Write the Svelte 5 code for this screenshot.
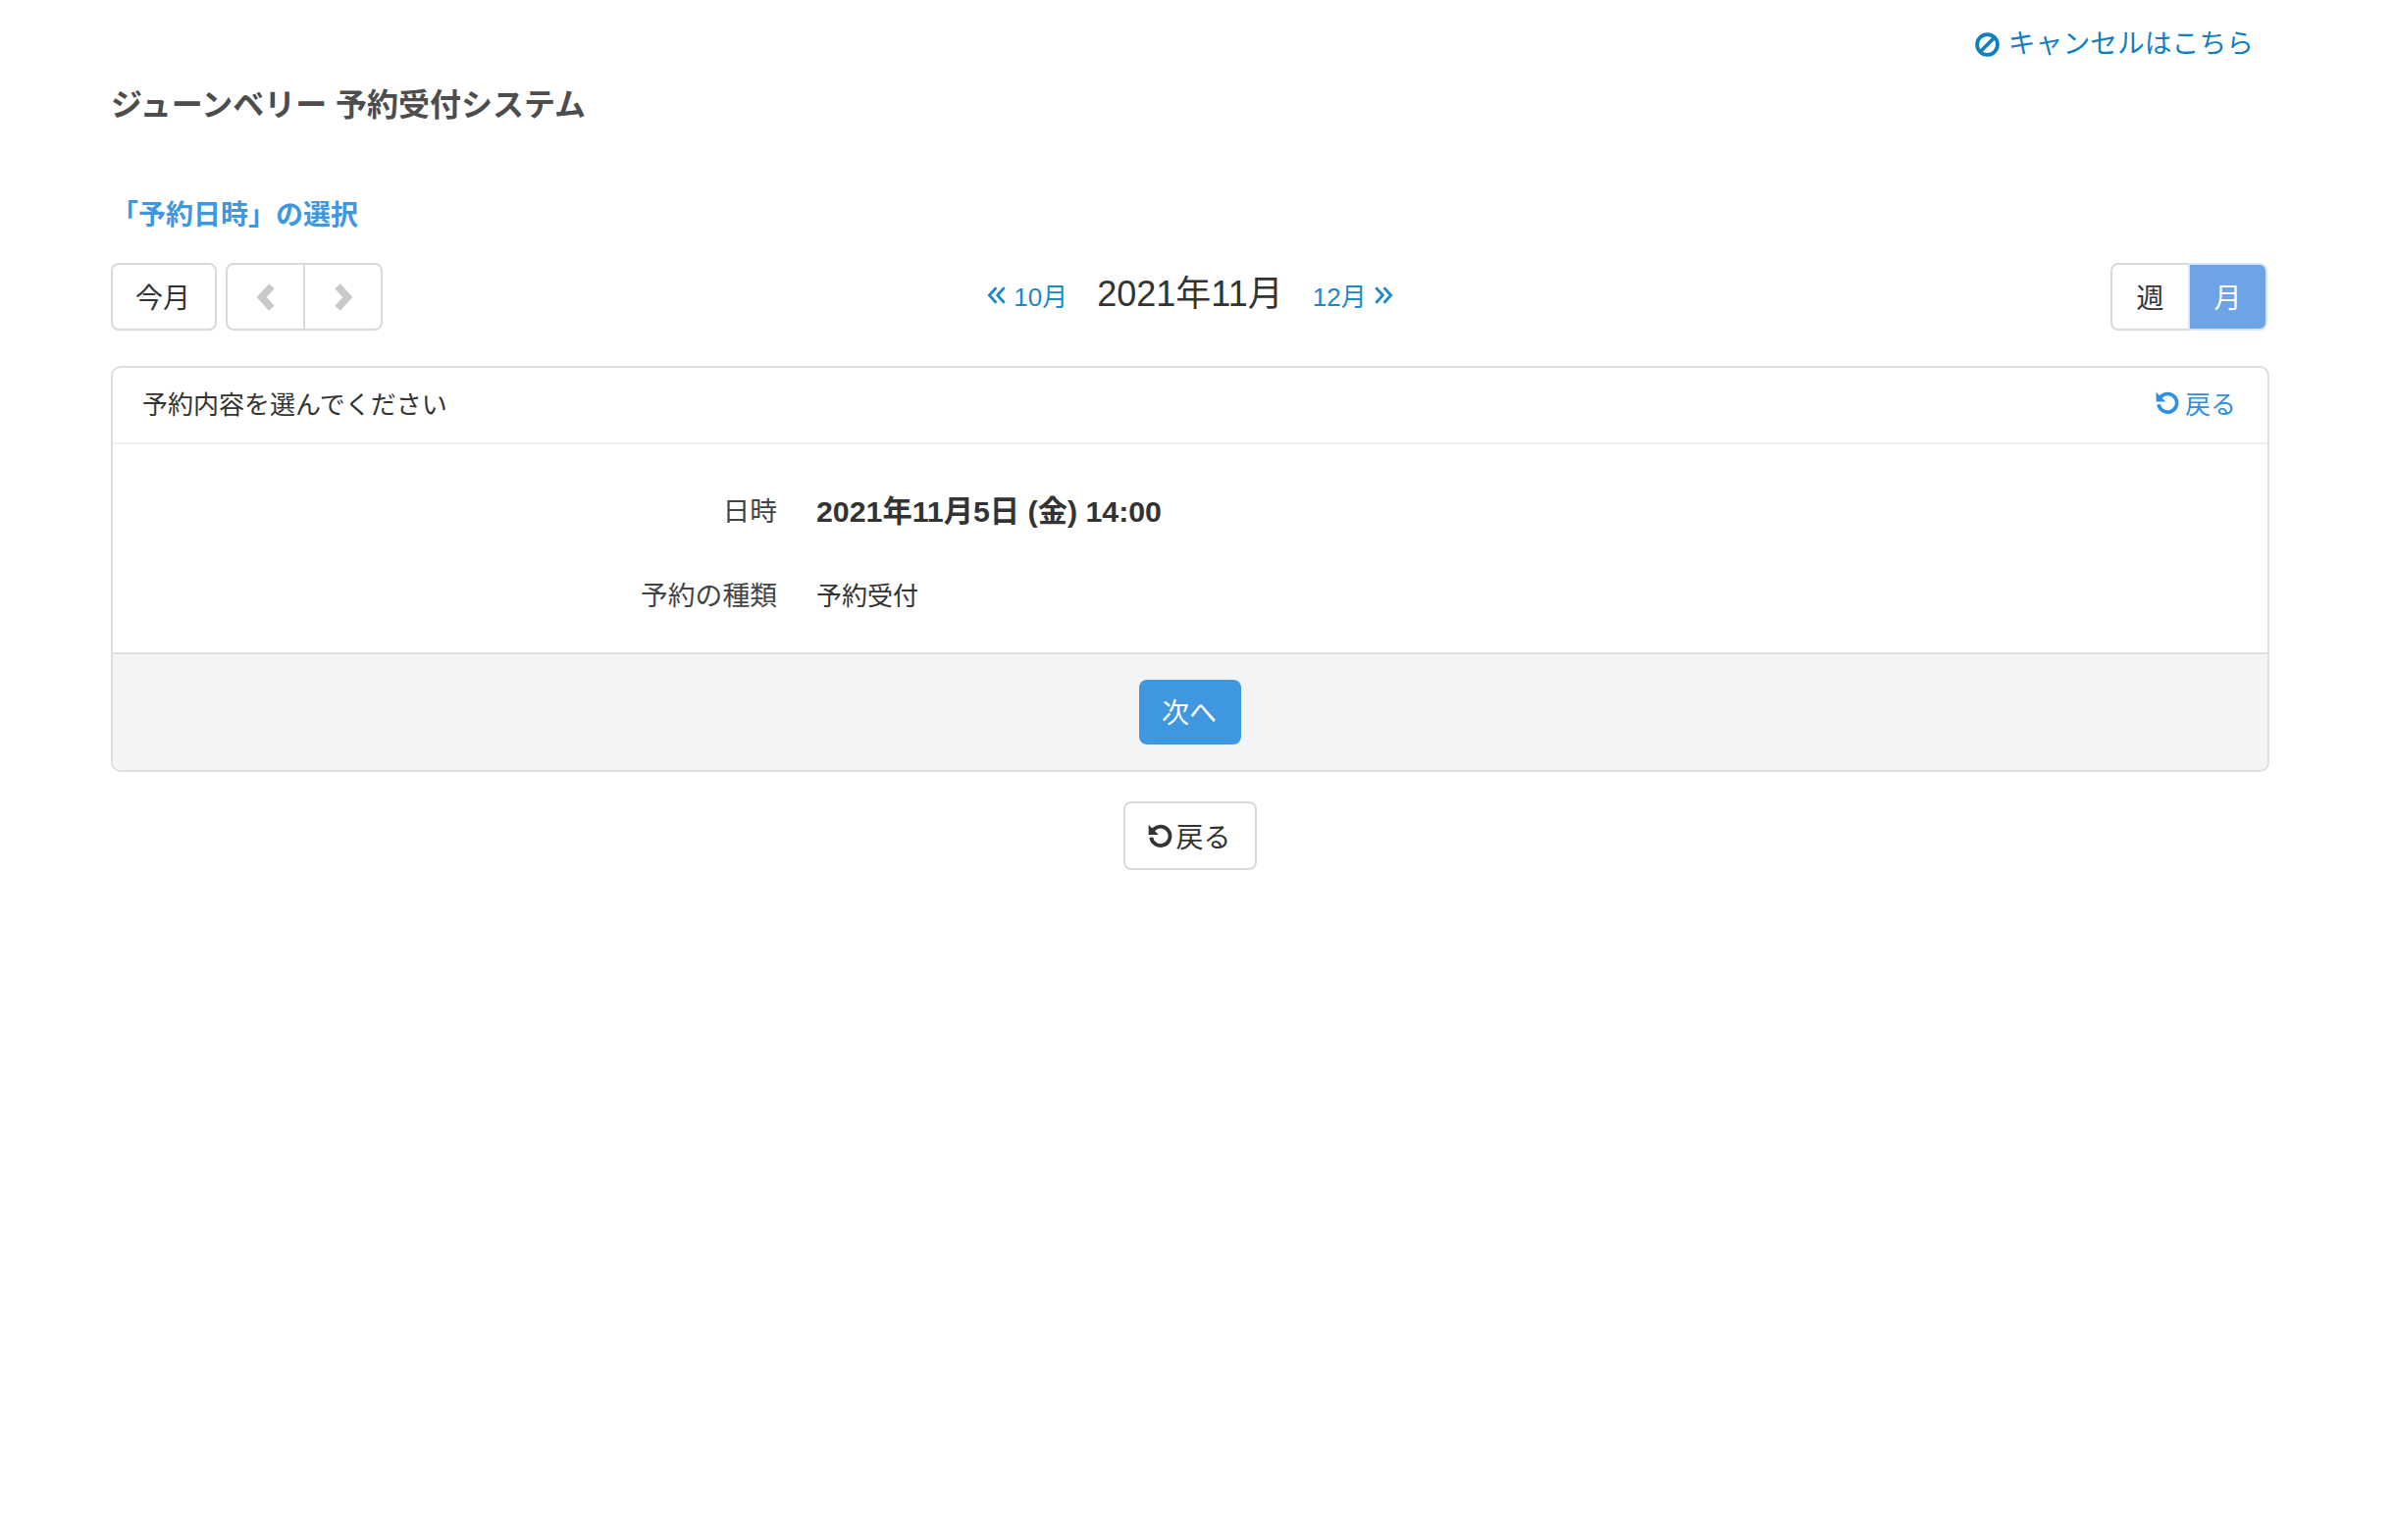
<script lang="ts">
  // Reservation confirm step: date picked, ask for the type and go on
  const rows = [
    { label: '日時', value: '2021年11月5日 (金) 14:00', strong: true },
    { label: '予約の種類', value: '予約受付', strong: false },
  ];
</script>

{#snippet undo()}
  <svg class="undo" viewBox="0 0 24 24" aria-hidden="true">
    <path d="M3.800 14a8.600 8.600 0 1 0 3.200-8L4.800 8" fill="none" stroke="currentColor" stroke-width="3.400" />
    <path d="M1.500 2.500v9h9z" fill="currentColor" />
  </svg>
{/snippet}

<div class="page">
  <div class="top-link">
    <a href="#cancel">
      <svg class="ban" viewBox="0 0 24 24" aria-hidden="true">
        <circle cx="12" cy="12" r="10" fill="none" stroke="currentColor" stroke-width="3.600" />
        <path d="M6 18 18 6" stroke="currentColor" stroke-width="3.600" />
      </svg>
      キャンセルはこちら
    </a>
  </div>

  <h1>ジューンベリー 予約受付システム</h1>
  <h2>「予約日時」の選択</h2>

  <div class="toolbar">
    <div class="left">
      <button class="btn today">今月</button>
      <div class="group">
        <button class="btn nav" aria-label="前へ">
          <svg viewBox="0 0 20 28"><path d="M15.500 3.500 6 14l9.500 10.500" fill="none" stroke="currentColor" stroke-width="7" /></svg>
        </button>
        <button class="btn nav" aria-label="次へ">
          <svg viewBox="0 0 20 28"><path d="M4.500 3.500 14 14 4.500 24.500" fill="none" stroke="currentColor" stroke-width="7" /></svg>
        </button>
      </div>
    </div>
    <div class="center">
      <a href="#prev" class="month">
        <svg viewBox="0 0 20 20" aria-hidden="true"><path d="M9.500 3 3 10l6.500 7M17 3l-6.500 7 6.500 7" fill="none" stroke="currentColor" stroke-width="2.500" /></svg>
        10月
      </a>
      <span class="current">2021年11月</span>
      <a href="#next" class="month">
        12月
        <svg viewBox="0 0 20 20" aria-hidden="true"><path d="m3 3 6.500 7L3 17m7.500-14 6.500 7-6.500 7" fill="none" stroke="currentColor" stroke-width="2.500" /></svg>
      </a>
    </div>
    <div class="group right">
      <button class="btn view week">週</button>
      <button class="btn view active">月</button>
    </div>
  </div>

  <section class="panel">
    <header>
      <span>予約内容を選んでください</span>
      <a href="#back">{@render undo()} 戻る</a>
    </header>
    <div class="body">
      {#each rows as row}
        <div class="row">
          <span class="label">{row.label}</span>
          <span class="value" class:strong={row.strong}>{row.value}</span>
        </div>
      {/each}
    </div>
    <footer>
      <button class="next">次へ</button>
    </footer>
  </section>

  <div class="back">
    <button class="btn back-btn">{@render undo()}戻る</button>
  </div>
</div>

<style>
  :global(body) { background: #fff; }

  .page {
    padding: 0 127px 0 113px;
    font-family: "Liberation Sans", "Noto Sans CJK JP", sans-serif;
    color: #333;
  }

  a { text-decoration: none; }

  .top-link { display: flex; justify-content: flex-end; padding: 25px 16px 0 0; height: 40px; line-height: 40px; font-size: 27.800px; }
  .top-link a { color: #0f7fc2; display: flex; align-items: center; gap: 9px; }
  .ban { width: 25px; height: 25px; }

  h1 { margin: 22px 0 0; font-size: 32px; line-height: 40px; font-weight: 700; color: #4d4d4d; }
  h2 { margin: 73px 0 0; font-size: 28px; line-height: 40px; font-weight: 700; color: #3f97e0; }

  .toolbar { display: flex; justify-content: space-between; align-items: center; margin-top: 28px; height: 69px; }
  .left { display: flex; gap: 9px; width: 400px; }

  .btn {
    height: 69px;
    padding: 0 2px 1px 0;
    background: #fff;
    border: 2px solid #d9d9d9;
    border-radius: 8px;
    font: inherit;
    font-size: 28px;
    color: #333;
  }
  .today { width: 108px; }

  .group { display: flex; }
  .group .btn:first-child { border-radius: 8px 0 0 8px; }
  .group .btn:last-child { border-radius: 0 8px 8px 0; margin-left: -2px; }
  .nav { width: 81px; padding: 0; color: #c9c9c9; display: flex; align-items: center; justify-content: center; }
  .nav svg { width: 22px; height: 30px; }

  .center { display: flex; align-items: center; gap: 30px; margin-left: 2px; padding-bottom: 6px; }
  .current { font-size: 36px; line-height: 48px; color: #333; }
  .month { display: flex; align-items: center; gap: 6px; font-size: 26px; color: #1f87c4; padding-top: 2px; }
  .month svg { width: 22px; height: 22px; }

  .right { margin-left: 240px; margin-right: 2px; }
  .view { width: 81px; padding: 0 0 1px; }
  .view.week { width: 81px; }
  .view.active { background: #6ea3e6; border-color: #d9e6f5; color: #fff; }

  .panel { margin-top: 36px; border: 2px solid #dedede; border-radius: 10px; overflow: hidden; }

  header {
    display: flex;
    justify-content: space-between;
    align-items: center;
    height: 78px;
    padding: 0 32px 6px 30px;
    box-sizing: border-box;
    border-bottom: 2px solid #efefef;
    font-size: 26px;
  }
  header a { display: flex; align-items: center; gap: 5px; color: #2f8fe0; font-size: 26px; }
  .undo { width: 26px; height: 26px; flex: none; }

  .body { height: 214px; padding-top: 36px; box-sizing: border-box; border-bottom: 2px solid #dedede; }
  .row { display: flex; align-items: center; gap: 40px; }
  .row:first-child { height: 60px; margin-bottom: 26px; }
  .row:last-child { height: 60px; }
  .label { width: 677px; text-align: right; font-size: 27.800px; color: #444; }
  .value { font-size: 26px; }
  .value.strong { font-size: 30.300px; font-weight: 700; }

  footer { display: flex; justify-content: center; align-items: center; height: 118px; background: #f4f4f4; }
  .next {
    width: 104px;
    height: 66px;
    padding: 0 2px 3px 0;
    border: 0;
    border-radius: 8px;
    background: #3f97e0;
    color: #fff;
    font: inherit;
    font-size: 28px;
  }

  .back { display: flex; justify-content: center; margin-top: 30px; }
  .back-btn { width: 136px; height: 70px; padding: 0 2px 1px 0; display: flex; align-items: center; justify-content: center; gap: 2px; }
  .back-btn .undo { width: 27px; height: 27px; }
</style>
